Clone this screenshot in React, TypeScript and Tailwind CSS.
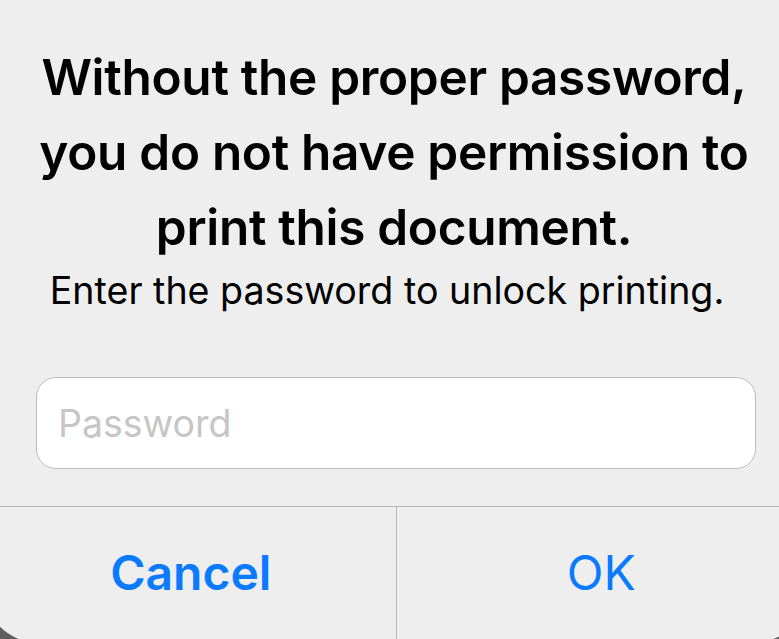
import React, { useState } from "react";

const PrintPasswordAlert = () => {
    const [password, setPassword] = useState("");

    return (
        <div className="w-[779px] h-[639px] overflow-hidden bg-[#5e5e5e]">
            <div
                className="-ml-[14px] w-[820px] h-[642px] flex flex-col bg-[#eeeeee] rounded-b-[50px] text-black"
                style={{ fontFamily: "Inter, 'Liberation Sans', sans-serif" }}
            >
                <h1 className="pt-[40px] pr-[4px] text-center font-semibold text-[49.5px] leading-[75px] tracking-[-0.3px]">
                    Without the proper password,
                    <br />
                    you do not have permission to
                    <br />
                    print this document.
                </h1>
                <p className="mt-[6px] pr-[18px] text-center text-[37.6px] leading-[40px]">
                    Enter the password to unlock printing.
                </p>
                <div className="mx-[50px] mt-[66px]">
                    <input
                        type="password"
                        value={password}
                        onChange={e => setPassword(e.target.value)}
                        placeholder="Password"
                        className="w-full h-[92px] rounded-[20px] border border-[#bcbcbc] bg-white px-[21px] text-[37.5px] outline-none placeholder:text-[#c6c6c6]"
                    />
                </div>
                <div className="mt-[37px] flex flex-1 border-t border-[#b8b8b8]">
                    <button className="flex-1 flex items-start justify-center pt-[40px] text-[#0a7aff] font-semibold text-[48px] leading-[52px]">
                        Cancel
                    </button>
                    <div className="w-px bg-[#b8b8b8]" />
                    <button className="flex-1 flex items-start justify-center pt-[40px] text-[#0a7aff] text-[48px] leading-[52px]">
                        OK
                    </button>
                </div>
            </div>
        </div>
    );
};

export default PrintPasswordAlert;
